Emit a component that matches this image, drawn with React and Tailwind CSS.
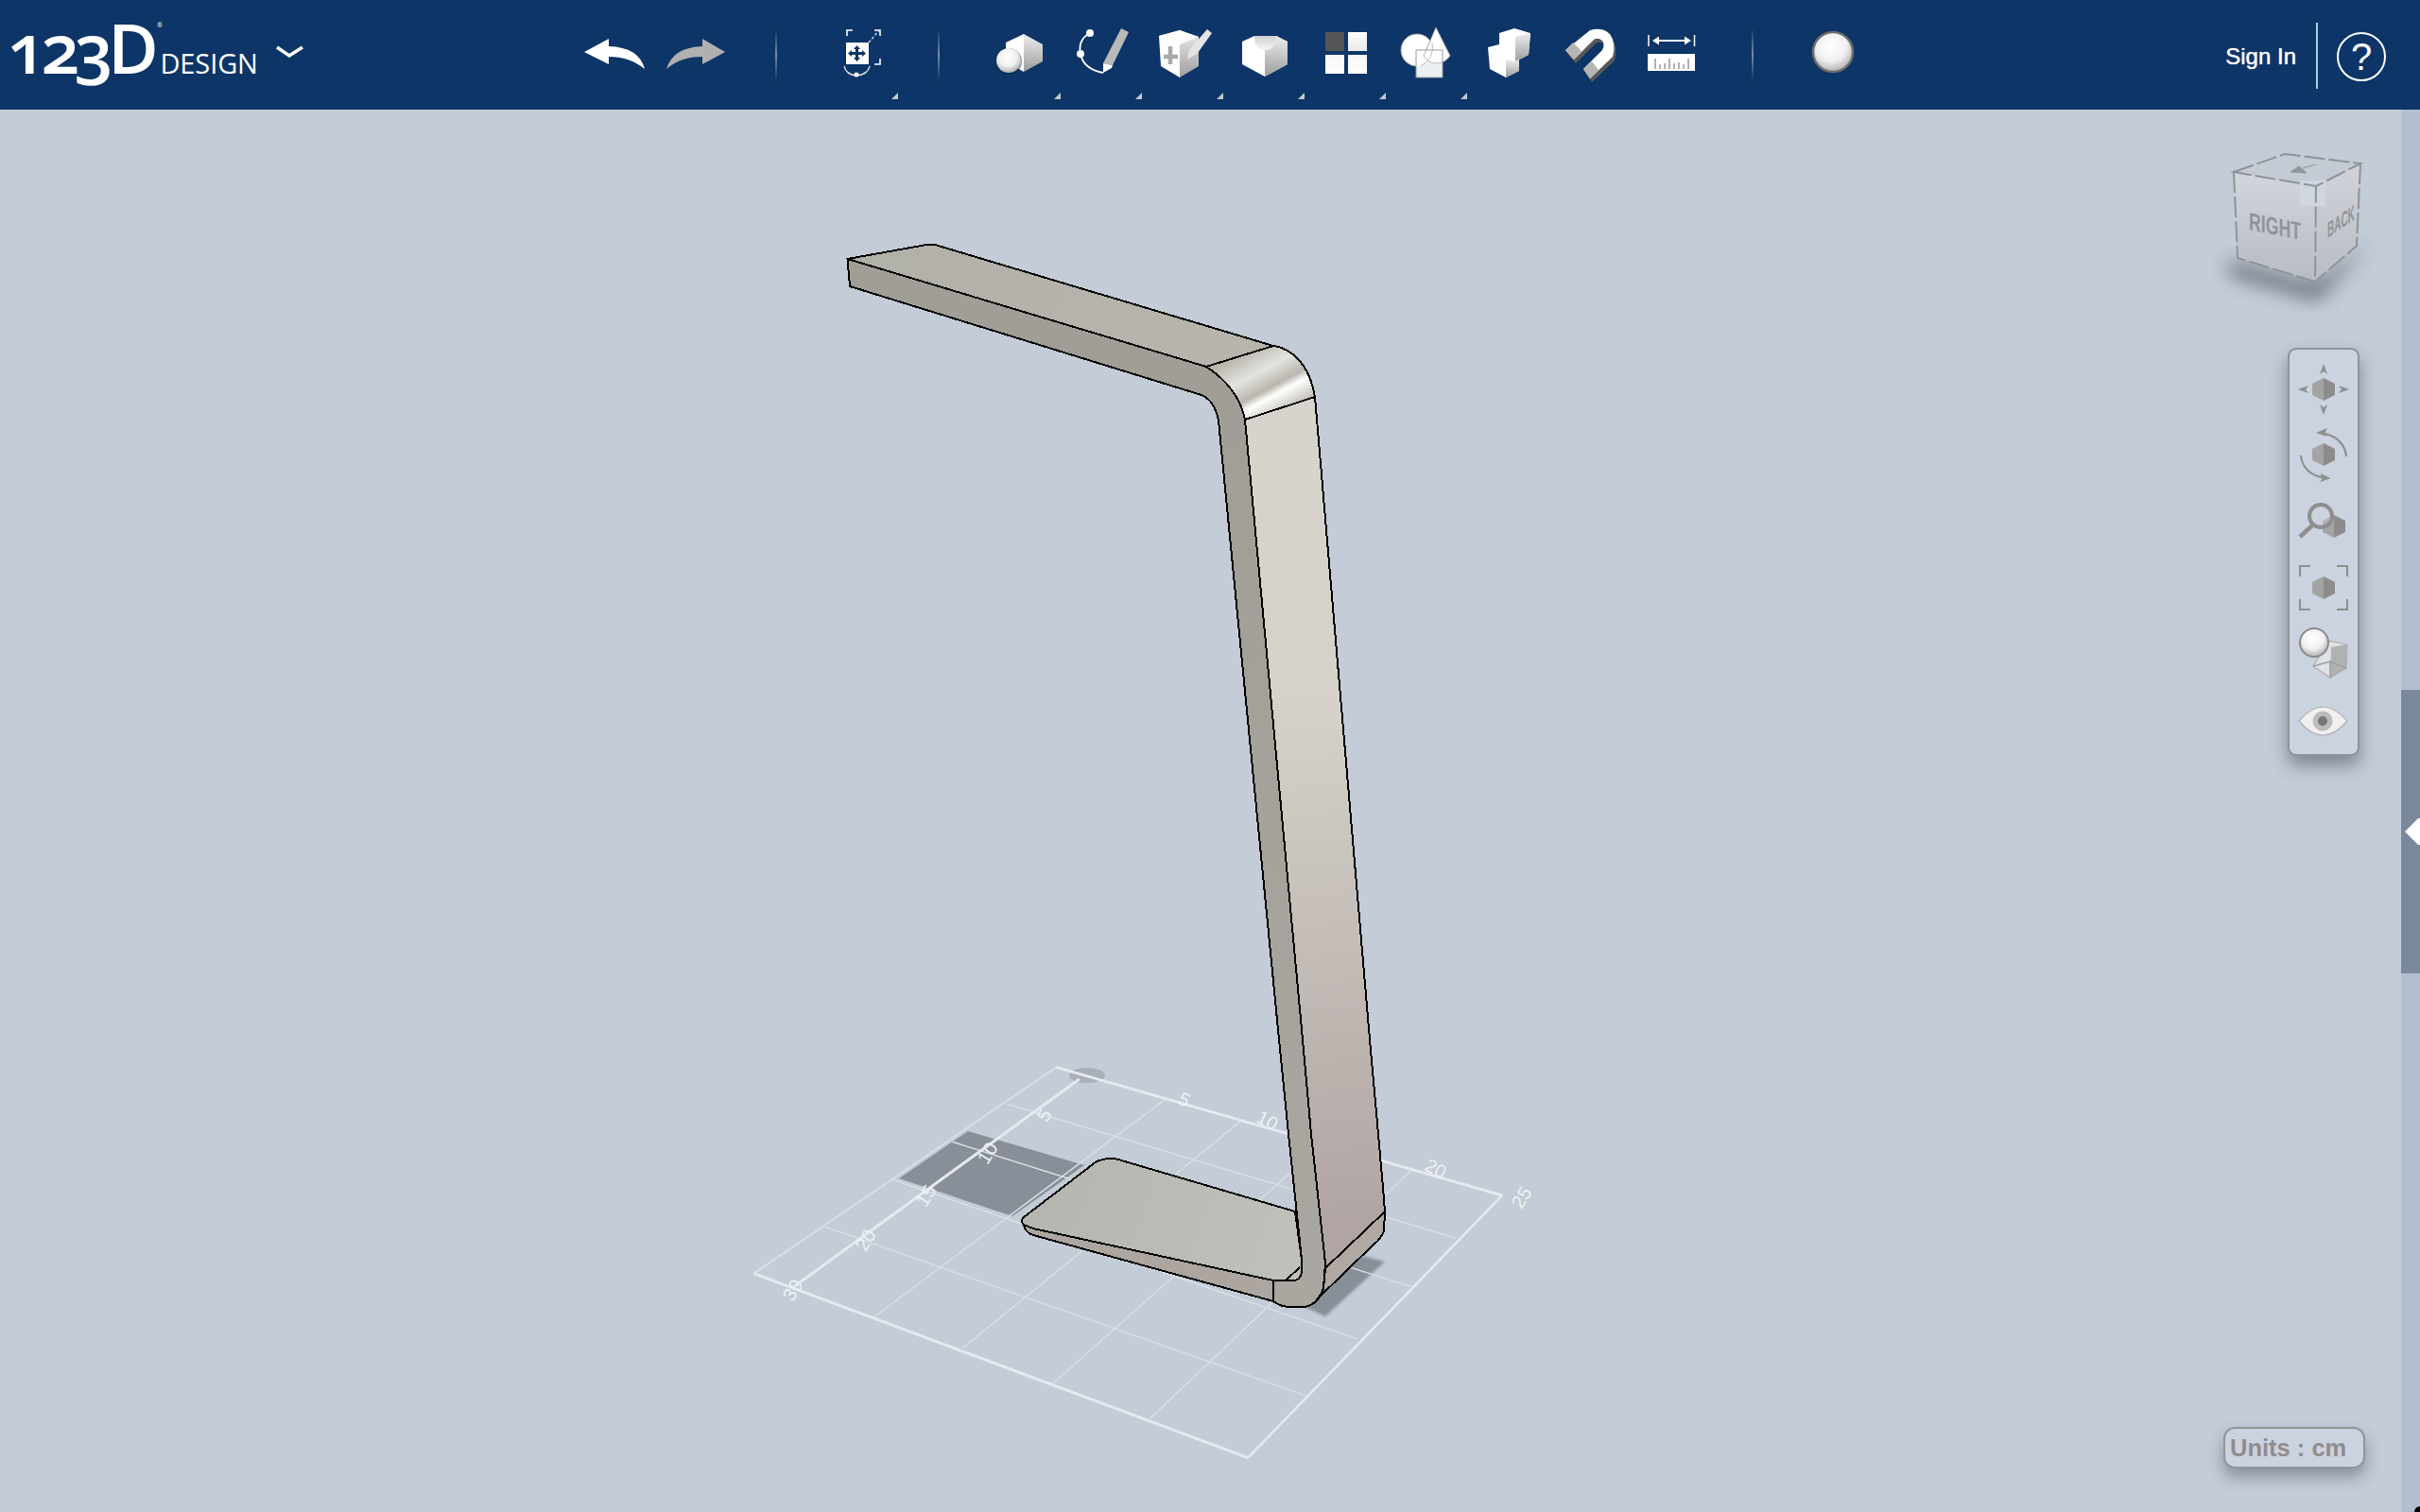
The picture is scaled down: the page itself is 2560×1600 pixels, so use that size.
import React from "react";

const NAVY = "#0d3567";

function Tri({ right }) {
  return (
    <svg viewBox="0 0 7 7" className="absolute w-[7px] h-[7px] top-[98px]" style={{ right }}>
      <polygon points="7,0 7,7 0,7" fill="#c4c7cc" />
    </svg>
  );
}

function Cell({ x0, children, tri, triRight = 0 }) {
  return (
    <div className="relative w-[86px] h-[116px] shrink-0">
      <svg viewBox={`${x0} 0 86 116`} className="w-[86px] h-[116px]">
        {children}
      </svg>
      {tri && <Tri right={triRight} />}
    </div>
  );
}

function Divider({ className }) {
  return <div className={"w-[2px] h-[56px] bg-linear-to-b from-transparent via-[#7b8ba3] to-transparent shrink-0 " + className} />;
}

function Defs() {
  return (
    <svg width="0" height="0" className="absolute">
      <defs>
        <linearGradient id="gv" x1="0" y1="0" x2="0" y2="1">
          <stop offset="0" stopColor="#ededed" />
          <stop offset="1" stopColor="#9d9d9d" />
        </linearGradient>
        <linearGradient id="gw" x1="0" y1="0" x2="0" y2="1">
          <stop offset="0" stopColor="#ffffff" />
          <stop offset="1" stopColor="#e9e9e9" />
        </linearGradient>
        <linearGradient id="gw2" x1="0" y1="0" x2="0" y2="1">
          <stop offset="0" stopColor="#f6f6f6" />
          <stop offset="1" stopColor="#ffffff" />
        </linearGradient>
        <radialGradient id="ball" cx="0.45" cy="0.35" r="0.7">
          <stop offset="0" stopColor="#ffffff" />
          <stop offset="0.55" stopColor="#f0f0f0" />
          <stop offset="1" stopColor="#a4a4a4" />
        </radialGradient>
        <linearGradient id="dent" x1="0" y1="0" x2="0" y2="1">
          <stop offset="0" stopColor="#cfcfcf" />
          <stop offset="1" stopColor="#f7f7f7" />
        </linearGradient>
      </defs>
    </svg>
  );
}

function Logo() {
  return (
    <div className="flex items-baseline ml-[8px] w-[290px] shrink-0 relative" style={{ fontFamily: '"Open Sans", sans-serif' }}>
      <span className="text-[73px] leading-[71px] font-semibold text-white oldstyle-nums tracking-[-5.5px]">123D</span>
      <span className="text-[29px] leading-[71px] text-white ml-[7px] tracking-[-0.1px]">DESIGN</span>
      <svg viewBox="0 0 30 16" className="absolute left-[284px] top-[34px] w-[30px] h-[16px]">
        <path d="M1 2 L14 11 L28 2" fill="none" stroke="#fff" strokeWidth="3.5" />
      </svg>
      <span className="absolute left-[158px] top-[9px] text-[7px] leading-[8px] text-white">®</span>
    </div>
  );
}

function Toolbar() {
  return (
    <header className="h-[116px] shrink-0 flex items-center" style={{ backgroundColor: NAVY }}>
      <Logo />
      <svg viewBox="610 33 165 50" className="w-[165px] h-[50px] ml-[312px] shrink-0">
        <path d="M618 55 L644 41 L644 49 Q676 50 682 73 Q666 60 644 60 L644 68 Z" fill="#fff" />
        <path d="M767 55 L743 41 L743 49 Q712 50 705 73 Q720 60 743 60 L743 68 Z" fill="#b0b0b0" />
      </svg>
      <Divider className="ml-[45px]" />
      <div className="ml-[47px] shrink-0">
        <Cell x0={869} tri triRight={5}>
          <path d="M896 38 V32 H902 M925 32 H931 V38 M896 62 V68 M931 62 V68 H925" fill="none" stroke="#fff" strokeWidth="1.6" />
          <rect x="895" y="45" width="24" height="23" fill="#fff" />
          <path d="M919 45 L930 32" stroke="#cfd4db" strokeWidth="1.5" strokeDasharray="3 2" />
          <path d="M906.5 48 L910 52 H908 V55 H912 V53 L916 56.5 L912 60 V58 H908 V61 H910 L906.5 65 L903 61 H905 V58 H901 V60 L897 56.5 L901 53 V55 H905 V52 H903 Z" fill={NAVY} />
          <path d="M893 70 Q895 79 906 80 Q918 79 920 70" fill="none" stroke="#dfe3e8" strokeWidth="1.3" />
          <circle cx="906" cy="79" r="2.5" fill="#fff" />
        </Cell>
      </div>
      <Divider className="ml-[37px]" />
      <div className="flex ml-[42px]">
        <Cell x0={1036} tri triRight={0}>
          <polygon points="1083,36 1064,45 1064,65 1083,76" fill="#fff" />
          <polygon points="1083,36 1103,47 1103,65 1083,76" fill="url(#gv)" />
          <circle cx="1067" cy="65" r="14" fill="#0a2a50" opacity="0.5" />
          <circle cx="1067" cy="64" r="13" fill="url(#ball)" />
        </Cell>
        <Cell x0={1122} tri>
          <path d="M1153 35 Q1140 42 1143 57 Q1146 73 1167 77" fill="none" stroke="#fff" strokeWidth="1.8" />
          <circle cx="1153" cy="35" r="4" fill="#fff" />
          <circle cx="1143" cy="57" r="4" fill="#fff" />
          <polygon points="1186,30 1194,34 1177,69 1167,67" fill="#b9b9b9" />
          <polygon points="1167,67 1177,69 1176,72 1167,77" fill="#fff" />
        </Cell>
        <Cell x0={1208} tri>
          <polygon points="1248,32 1268,39 1268,70 1248,82" fill="url(#gv)" />
          <polygon points="1248,32 1226,38 1228,70 1248,82 1248,45" fill="#fff" />
          <polygon points="1248,32 1268,39 1248,47 1226,38" fill="#fdfdfd" />
          <path d="M1238 49 L1238 68 M1231 60 L1246 60" stroke="#a9a9a9" strokeWidth="4.5" />
          <polygon points="1277,31 1282,35 1267,56 1256,63 1258,53" fill="#e4e4e4" />
        </Cell>
        <Cell x0={1294} tri>
          <polygon points="1327,38 1350,38 1362,44 1362,68 1338,81 1314,68 1314,44" fill="#fff" />
          <polygon points="1338,50 1350,38 1362,44 1362,68 1338,81" fill="url(#gv)" />
          <path d="M1327 38 H1350 Q1350 53 1338 53 Q1327 53 1327 38 Z" fill="url(#dent)" />
        </Cell>
        <Cell x0={1380} tri>
          <rect x="1402" y="34" width="20" height="20" fill="#565656" />
          <rect x="1426" y="34" width="20" height="20" fill="url(#gw)" />
          <rect x="1402" y="58" width="20" height="20" fill="url(#gw2)" />
          <rect x="1426" y="58" width="20" height="20" fill="url(#gw2)" />
        </Cell>
        <Cell x0={1466} tri>
          <circle cx="1499" cy="53" r="17" fill="#fff" stroke="#a8a8a8" strokeWidth="0.8" />
          <path d="M1519 29 L1534 59 Q1528 67 1520 67 Q1510 67 1506 59 Z" fill="#fff" stroke="#a8a8a8" strokeWidth="0.8" />
          <rect x="1498" y="53" width="28" height="29" fill="#fff" fillOpacity="0.92" stroke="#9a9a9a" strokeWidth="1" />
          <path d="M1515 45 Q1518 62 1503 70 M1506 59 Q1512 44 1514 42" fill="none" stroke="#a8a8a8" strokeWidth="0.8" />
          <path d="M1506 59 Q1510 67 1520 67 Q1528 67 1534 59" fill="none" stroke="#a8a8a8" strokeWidth="0.8" />
        </Cell>
        <Cell x0={1552}>
          <polygon points="1602,30 1619,35 1617,58 1607,63 1607,75 1593,82 1576,73 1574,50 1586,47 1586,35" fill="#fff" />
          <polygon points="1603,39 1619,35 1617,58 1603,65" fill="url(#gv)" />
          <polygon points="1593,63 1603,65 1607,63 1607,75 1593,82" fill="url(#gv)" />
        </Cell>
        <Cell x0={1638}>
          <g transform="translate(2 4)" fill="#585858">
            <path d="M1656 53 L1682 32 Q1695 28 1703 36 Q1710 46 1706 60 L1682 83 L1675 73 L1695 53 Q1698 46 1695 43 Q1690 39 1686 42 L1665 63 Z" />
          </g>
          <path d="M1656 53 L1682 32 Q1695 28 1703 36 Q1710 46 1706 60 L1682 83 L1675 73 L1695 53 Q1698 46 1695 43 Q1690 39 1686 42 L1665 63 Z" fill="#fff" />
          <polygon points="1656,53 1664,45 1673,54 1665,63" fill="#b5b5b5" />
          <polygon points="1675,73 1684,65 1691,74 1682,83" fill="#b5b5b5" />
        </Cell>
        <Cell x0={1724}>
          <path d="M1744 37 V49 M1792.5 37 V49" stroke="#fff" strokeWidth="1.5" />
          <path d="M1749 43 H1787" stroke="#fff" strokeWidth="2" />
          <polygon points="1748,43 1755,38.5 1755,47.5" fill="#fff" />
          <polygon points="1789,43 1782,38.5 1782,47.5" fill="#fff" />
          <rect x="1743" y="57" width="50" height="18" fill="#fff" />
          <path d="M1751 62 V73 M1756 68 V73 M1761 67 V73 M1766 62 V73 M1771 67 V73 M1776 66 V73 M1781 68 V73 M1786 62 V73" stroke="#a0a0a0" strokeWidth="1.6" />
        </Cell>
      </div>
      <Divider className="ml-[43px]" />
      <svg viewBox="0 0 50 50" className="w-[50px] h-[50px] ml-[59px] mb-[6px] shrink-0">
        <circle cx="25" cy="25" r="21" fill="url(#ball)" stroke="#6c6c6c" strokeWidth="2.5" />
      </svg>
      <div className="flex-1" />
      <span className="text-[24px] leading-[30px] text-white mr-[21px] [text-shadow:0_0_1px_#fff] mt-[3px]" style={{ fontFamily: '"Liberation Sans", sans-serif' }}>Sign In</span>
      <div className="w-[2px] h-[70px] bg-[#a9d2dc] mt-[2px]" />
      <div className="w-[52px] h-[52px] ml-[20px] mr-[36px] mt-[4px] rounded-full border-2 border-white flex items-center justify-center text-white text-[40px] leading-[40px]" style={{ fontFamily: '"Liberation Sans", sans-serif' }}>?</div>
    </header>
  );
}

function Scene() {
  const thick = "#e6eaef";
  const faint = "#d9dfe6";
  const rows = [
    [520, 205, 1385, 630],
    [415, 325, 1300, 785],
    [300, 445, 1195, 950],
    [170, 595, 1095, 1130],
  ];
  const cols = [
    [825, 190, 265, 880],
    [970, 260, 435, 980],
    [1130, 330, 610, 1090],
    [1300, 415, 795, 1205],
  ];
  const labels = [
    ["5", 1106, 1181, -58],
    ["10", 1046, 1221, -58],
    ["15", 981, 1266, -58],
    ["20", 917, 1313, -58],
    ["30", 840, 1366, -58],
    ["5", 1252, 1165, 28],
    ["10", 1340, 1187, 28],
    ["20", 1518, 1238, 28],
    ["25", 1611, 1268, -58],
  ];
  const line = { stroke: "#000", strokeWidth: 2, shapeRendering: "crispEdges" };
  return (
    <svg viewBox="0 116 2540 1484" className="absolute inset-0 w-[2540px] h-[1484px]">
      <defs>
        <linearGradient id="topf" gradientUnits="userSpaceOnUse" x1="900" y1="270" x2="1340" y2="380">
          <stop offset="0" stopColor="#b1b0a9" />
          <stop offset="1" stopColor="#b8b5ad" />
        </linearGradient>
        <linearGradient id="front" gradientUnits="userSpaceOnUse" x1="1340" y1="440" x2="1440" y2="1290">
          <stop offset="0" stopColor="#d7d4cd" />
          <stop offset="0.35" stopColor="#d6d2ca" />
          <stop offset="1" stopColor="#b0a5a3" />
        </linearGradient>
        <linearGradient id="strip" gradientUnits="userSpaceOnUse" x1="1300" y1="440" x2="1380" y2="1340">
          <stop offset="0" stopColor="#a19e97" />
          <stop offset="1" stopColor="#aaa6a0" />
        </linearGradient>
        <linearGradient id="band" gradientUnits="userSpaceOnUse" x1="1318" y1="372" x2="1353" y2="437">
          <stop offset="0" stopColor="#b9b6ae" />
          <stop offset="0.35" stopColor="#e4e4df" />
          <stop offset="0.62" stopColor="#b8b6ad" />
          <stop offset="0.74" stopColor="#ffffff" />
          <stop offset="1" stopColor="#c6c4bb" />
        </linearGradient>
        <linearGradient id="base" gradientUnits="userSpaceOnUse" x1="1100" y1="1240" x2="1360" y2="1340">
          <stop offset="0" stopColor="#b5b6af" />
          <stop offset="1" stopColor="#bfc0b9" />
        </linearGradient>
        <filter id="soft" x="-10%" y="-10%" width="120%" height="120%">
          <feGaussianBlur stdDeviation="1.5" />
        </filter>
      </defs>

      <polygon points="1024,1197 1147,1233 1071,1287 951,1247" fill="#888f98" />
      <polygon points="1437,1328 1465,1335 1402,1393 1380,1383" fill="#888f98" filter="url(#soft)" />

      <ellipse cx="1150" cy="1138" rx="19" ry="8" fill="#a9b0b9" />
      <g transform="translate(780 1100) scale(0.5485 0.3333)">
        {rows.concat(cols).map((r, i) => (
          <line key={i} x1={r[0]} y1={r[1]} x2={r[2]} y2={r[3]} stroke={faint} strokeWidth="1.5" vectorEffect="non-scaling-stroke" />
        ))}
        <line x1="615" y1="88" x2="32" y2="743" stroke={faint} strokeWidth="2" vectorEffect="non-scaling-stroke" />
        <line x1="660" y1="125" x2="105" y2="790" stroke={thick} strokeWidth="3" vectorEffect="non-scaling-stroke" />
        <line x1="615" y1="88" x2="1475" y2="495" stroke={thick} strokeWidth="3" vectorEffect="non-scaling-stroke" />
        <line x1="1475" y1="495" x2="985" y2="1328" stroke={thick} strokeWidth="2.5" vectorEffect="non-scaling-stroke" />
        <line x1="32" y1="743" x2="985" y2="1328" stroke={thick} strokeWidth="3" vectorEffect="non-scaling-stroke" />
      </g>
      {labels.map((l, i) => (
        <text key={i} transform={`translate(${l[1]} ${l[2]}) rotate(${l[3]})`} textAnchor="middle" dominantBaseline="middle" fill="#eef1f4" fontSize="20" fontFamily="Liberation Sans, sans-serif">
          {l[0]}
        </text>
      ))}

      <path {...line} d="M1081 1290 L1084 1300 Q1087 1305 1093 1307 L1347 1377 L1347 1355 L1093 1300 L1083 1296 Z" fill="#aca5a0" />
      <path {...line} d="M1370 1282 L1183 1227 Q1172 1224 1160 1229 L1083 1288 Q1079 1292 1083 1296 L1093 1300 L1347 1355 L1368 1355 Q1375 1355 1377 1347 L1377 1333 Z" fill="url(#base)" />
      <path {...line} d="M1360 1355 L1375 1341" fill="none" />
      <path {...line} d="M896.5 274 L899 303 L1271 418 Q1285 424 1289 445 L1353 1100 L1363 1200 L1377 1333 L1377 1347 Q1375 1355 1368 1355 L1347 1355 L1347 1377 Q1355 1383 1365 1383 L1380 1383 Q1395 1380 1400 1363 L1402 1337 L1387 1200 L1378 1100 L1317 444 Q1310 410 1276 388 Z" fill="url(#strip)" />
      <path {...line} d="M1402 1342 L1465 1282 L1464 1303 Q1460 1312 1453 1317 L1393 1375 Q1398 1370 1400 1363 Z" fill="#b0a8a3" />
      <path {...line} d="M1317 444 L1391 420 L1449 1100 L1458 1200 L1463 1257 L1465 1282 L1402 1342 L1402 1337 L1387 1200 L1378 1100 Z" fill="url(#front)" />
      <path {...line} d="M1276 388 L1347 366 L1353 367 Q1384 378 1391 420 L1317 444 Q1310 410 1276 388 Z" fill="url(#band)" />
      <path {...line} d="M896.5 274 L980 259 L989 259 L1347 366 L1276 388 Z" fill="url(#topf)" />
    </svg>
  );
}

function ViewCube() {
  const dash = { stroke: "#8e939a", strokeWidth: 2, strokeDasharray: "22 4", fill: "none" };
  return (
    <svg viewBox="2340 150 180 180" className="absolute right-[20px] top-[34px] w-[180px] h-[180px]">
      <defs>
        <linearGradient id="cf" x1="0" y1="0" x2="0" y2="1">
          <stop offset="0" stopColor="#d2d5db" />
          <stop offset="1" stopColor="#b8bbc1" />
        </linearGradient>
        <linearGradient id="cr" x1="0" y1="0" x2="0" y2="1">
          <stop offset="0" stopColor="#d0d3d9" />
          <stop offset="1" stopColor="#b9bcc2" />
        </linearGradient>
        <filter id="cs" x="-30%" y="-50%" width="160%" height="200%">
          <feGaussianBlur stdDeviation="10" />
        </filter>
      </defs>
      <polygon points="2356,276 2449,300 2505,258 2452,318 2360,292" fill="#3f464f" opacity="0.7" filter="url(#cs)" />
      <polygon points="2363,182 2417,163 2497,173 2450,197" fill="#c5cbd4" />
      <polygon points="2363,182 2450,197 2449,298 2367,273" fill="url(#cf)" />
      <polygon points="2450,197 2497,173 2493,260 2449,298" fill="url(#cr)" />
      <rect x="2433" y="191" width="27" height="27" fill="#cfd6e0" />
      <path d="M2363 182 L2417 163 L2497 173 L2450 197 Z M2363 182 L2367 273 L2449 298 L2450 197 M2497 173 L2493 260 L2449 298" {...dash} />
      <text transform="matrix(1 0.2 0 1 2379 243)" fontSize="26" fontWeight="700" fill="#8f949c" textLength="55" lengthAdjust="spacingAndGlyphs" fontFamily="Liberation Sans, sans-serif">RIGHT</text>
      <text transform="matrix(0.8 -0.55 0 1 2462 252)" fontSize="23" fontWeight="700" fill="#8f949c" textLength="36" lengthAdjust="spacingAndGlyphs" fontFamily="Liberation Sans, sans-serif">BACK</text>
      <path d="M2423 182 L2432 176 L2440 183 Z M2436 178 L2450 174" fill="#8f949c" stroke="#8f949c" />
    </svg>
  );
}

function Hex({ cx, cy }) {
  return (
    <>
      <polygon points={`${cx},${cy - 12} ${cx - 12},${cy - 6} ${cx - 12},${cy + 6} ${cx},${cy + 12}`} fill="#a4a4a4" />
      <polygon points={`${cx},${cy - 12} ${cx + 12},${cy - 6} ${cx + 12},${cy + 6} ${cx},${cy + 12}`} fill="#8c8c8c" />
    </>
  );
}

function NavPanel() {
  const c = "#8e8e8e";
  return (
    <div className="absolute left-[2420px] top-[252px] w-[76px] h-[432px] rounded-[9px] border-2 border-[#8f9297] bg-[#cbd3e0] flex flex-col items-center pt-[7px] shadow-[0_10px_18px_rgba(60,66,76,0.5)]">
      <svg viewBox="2422 377 72 70" className="w-[72px] h-[70px] shrink-0">
        <Hex cx={2458} cy={412} />
        <g fill={c}>
          <polygon points="2458,385 2462,396 2458,393 2454,396" />
          <polygon points="2458,439 2462,428 2458,431 2454,428" />
          <polygon points="2431,412 2442,408 2439,412 2442,416" />
          <polygon points="2485,412 2474,408 2477,412 2474,416" />
        </g>
      </svg>
      <svg viewBox="2422 447 72 70" className="w-[72px] h-[70px] shrink-0">
        <Hex cx={2458} cy={481} />
        <path d="M2482 483 Q2480 463 2456 458" fill="none" stroke={c} strokeWidth="2.2" />
        <path d="M2434 482 Q2436 502 2460 506" fill="none" stroke={c} strokeWidth="2.2" />
        <polygon points="2450,458 2462,453 2459,458 2462,462" fill={c} />
        <polygon points="2466,506 2454,501 2457,506 2454,510" fill={c} />
      </svg>
      <svg viewBox="2422 517 72 70" className="w-[72px] h-[70px] shrink-0">
        <Hex cx={2469} cy={557} />
        <circle cx="2455" cy="546" r="12" fill="#cbd3e0" fillOpacity="0.35" stroke={c} strokeWidth="4" />
        <path d="M2446 556 L2433 568" stroke={c} strokeWidth="4.5" />
      </svg>
      <svg viewBox="2422 587 72 70" className="w-[72px] h-[70px] shrink-0">
        <Hex cx={2458} cy={622} />
        <path d="M2433 610 V599 H2444 M2472 599 H2483 V610 M2433 634 V645 H2444 M2472 645 H2483 V634" fill="none" stroke={c} strokeWidth="2" />
      </svg>
      <svg viewBox="2422 657 72 70" className="w-[72px] h-[70px] shrink-0">
        <polygon points="2463,678 2483,682 2482,707 2465,717 2447,705" fill="#dfe2e6" stroke="#b5b5b5" strokeWidth="1.5" />
        <polygon points="2466,685 2482,682 2482,707 2465,717" fill="#a3a5a8" fillOpacity="0.8" />
        <path d="M2447 705 L2465 700 L2482 707 M2465 700 V717" stroke="#9e9e9e" strokeWidth="1.5" fill="none" />
        <circle cx="2448" cy="680" r="15" fill="url(#ball)" stroke="#8a8a8a" strokeWidth="2" />
      </svg>
      <svg viewBox="2422 727 72 70" className="w-[72px] h-[70px] shrink-0">
        <path d="M2432 763 Q2457 733 2483 763 Q2457 793 2432 763 Z" fill="#f0f0f0" stroke="#b0b0b0" strokeWidth="1.2" />
        <circle cx="2457" cy="763" r="10.5" fill="#bcbcbc" />
        <circle cx="2457" cy="763" r="5" fill="#777" />
      </svg>
    </div>
  );
}

function Units() {
  return (
    <div className="absolute left-[2352px] top-[1394px] w-[150px] h-[44px] rounded-[12px] border-2 border-[#929599] bg-[#cbd3e0] flex items-center pl-[5px] text-[25.5px] leading-[30px] font-bold text-[#918c8c] shadow-[0_9px_16px_rgba(60,66,76,0.42)]" style={{ fontFamily: '"Liberation Sans", sans-serif' }}>
      Units : cm
    </div>
  );
}

export default function App() {
  return (
    <div className="w-[2560px] h-[1600px] flex flex-col overflow-hidden relative bg-[#c3ccd7]">
      <Defs />
      <Toolbar />
      <main className="flex-1 flex min-h-0">
        <div className="flex-1 relative">
          <Scene />
          <ViewCube />
          <NavPanel />
          <Units />
        </div>
        <aside className="w-[20px] shrink-0 flex flex-col bg-[#b1bfd0] relative">
          <div className="h-[614px] shrink-0" />
          <div className="h-[300px] shrink-0 bg-[#7a8a9c] flex items-center justify-end">
            <svg viewBox="0 0 16 28" className="w-[16px] h-[28px]">
              <polygon points="0,14 14,0 16,0 16,28 14,28" fill="#fff" />
            </svg>
          </div>
          <div className="absolute right-0 bottom-0 w-[6px] h-[6px] rounded-tl-[6px] bg-black" />
        </aside>
      </main>
    </div>
  );
}
